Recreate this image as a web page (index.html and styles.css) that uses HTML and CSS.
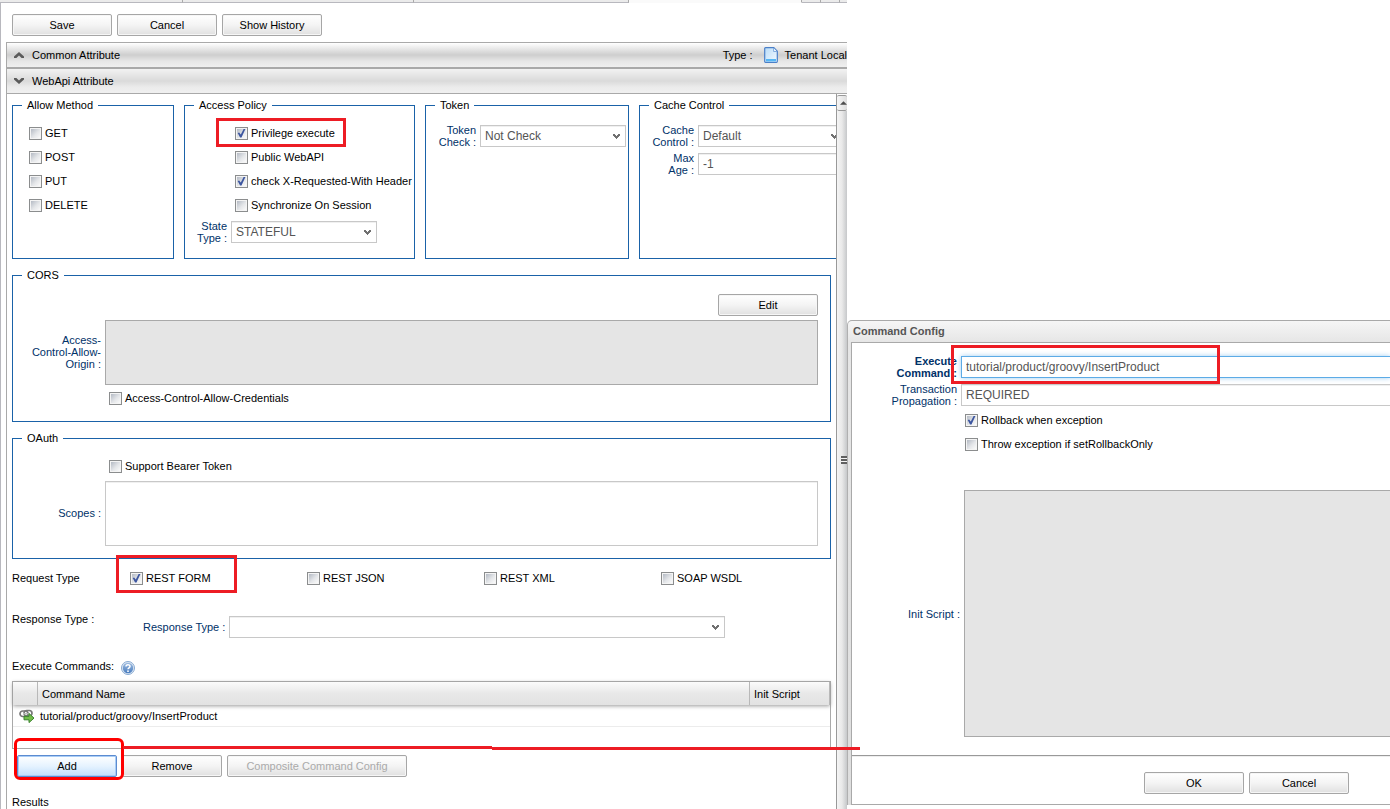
FILE: index.html
```html
<!DOCTYPE html>
<html lang="en">
<head>
<meta charset="utf-8">
<title>WebApi Attribute</title>
<link rel="stylesheet" href="styles.css">
</head>
<body>
<svg class="defs" aria-hidden="true">
  <symbol id="chevron" viewBox="0 0 7 5"><path d="M0 0h2v1h1v1h1V1h1V0h2v2H6v1H5v1H4v1H3V4H2V3H1V2H0z" fill="#707070"/></symbol>
</svg>
<div class="screen">
  <main class="editor">
    <div class="tabs" aria-hidden="true">
      <span class="tab tab-first"></span><span class="tab tab-second"></span><span class="tab tab-third"></span><span class="tab tab-active"></span><span class="tab tab-tool"></span><span class="tab tab-tool"></span><span class="tab tab-rest"></span>
    </div>
    <div class="toolbar">
      <button class="btn" type="button">Save</button>
      <button class="btn" type="button">Cancel</button>
      <button class="btn" type="button">Show History</button>
    </div>
    <section class="accordion">
      <header class="acc-head acc-common">
        <svg class="acc-arrow" viewBox="0 0 10 6"><path d="M0 6V4.6L5 0l5 4.6V6H7.6L5 3.4 2.4 6z" fill="#5a5a5a"/></svg>
        <span>Common Attribute</span>
        <span class="type-label">Type :</span>
        <svg class="doc-icon" viewBox="0 0 14 16"><defs><linearGradient id="paper" x2="1" y2="1"><stop stop-color="#b9dcf8"/><stop offset="1" stop-color="#f4faff"/></linearGradient></defs><path d="M1.5.7h8.3l3.5 3.6v10.2a.8.8 0 0 1-.8.8h-11a.8.8 0 0 1-.8-.8v-13a.8.8 0 0 1 .8-.8z" fill="url(#paper)" stroke="#4a7fc8" stroke-width="1.2"/><path d="M9.6 1v3.5h3.3" fill="#f4faff" stroke="#6b9bd8" stroke-width=".8"/><path d="M2 12h10v2.4H2z" fill="#55b6f5"/></svg>
        <span>Tenant Local</span>
      </header>
      <header class="acc-head acc-webapi">
        <svg class="acc-arrow" viewBox="0 0 10 6"><path d="M0 0v1.4L5 6l5-4.6V0H7.6L5 2.6 2.4 0z" fill="#5a5a5a"/></svg>
        <span>WebApi Attribute</span>
      </header>
      <div class="acc-body">
        <div class="pane">
          <div class="policies">
            <fieldset class="group g-method">
              <legend>Allow Method</legend>
              <label class="check"><input type="checkbox">GET</label>
              <label class="check"><input type="checkbox">POST</label>
              <label class="check"><input type="checkbox">PUT</label>
              <label class="check"><input type="checkbox">DELETE</label>
            </fieldset>
            <fieldset class="group g-access">
              <legend>Access Policy</legend>
              <label class="check mark mark-privilege"><input type="checkbox" checked>Privilege execute</label>
              <label class="check"><input type="checkbox">Public WebAPI</label>
              <label class="check"><input type="checkbox" checked>check X-Requested-With Header</label>
              <label class="check"><input type="checkbox">Synchronize On Session</label>
              <div class="field">
                <label class="caption" for="state">State<br>Type :</label>
                <div class="combo"><select id="state"><option>STATEFUL</option></select><svg><use href="#chevron"/></svg></div>
              </div>
            </fieldset>
            <fieldset class="group g-token">
              <legend>Token</legend>
              <div class="field">
                <label class="caption" for="token">Token<br>Check :</label>
                <div class="combo"><select id="token"><option>Not Check</option></select><svg><use href="#chevron"/></svg></div>
              </div>
            </fieldset>
            <fieldset class="group g-cache">
              <legend>Cache Control</legend>
              <div class="field">
                <label class="caption" for="cache">Cache<br>Control :</label>
                <div class="combo"><select id="cache"><option>Default</option></select><svg><use href="#chevron"/></svg></div>
              </div>
              <div class="field">
                <label class="caption" for="age">Max<br>Age :</label>
                <input class="text" id="age" type="text" value="-1">
              </div>
            </fieldset>
          </div>

          <fieldset class="group g-wide g-cors">
            <legend>CORS</legend>
            <div class="edit-row"><button class="btn" type="button">Edit</button></div>
            <div class="area-row">
              <label class="caption" for="origin">Access-<br>Control-Allow-<br>Origin :</label>
              <textarea class="area" id="origin" disabled></textarea>
            </div>
            <label class="check"><input type="checkbox">Access-Control-Allow-Credentials</label>
          </fieldset>

          <fieldset class="group g-wide g-oauth">
            <legend>OAuth</legend>
            <label class="check"><input type="checkbox">Support Bearer Token</label>
            <div class="area-row">
              <label class="caption" for="scopes">Scopes :</label>
              <textarea class="area" id="scopes"></textarea>
            </div>
          </fieldset>

          <div class="request-row">
            <span>Request Type</span>
            <label class="check mark mark-rest"><input type="checkbox" checked>REST FORM</label>
            <label class="check"><input type="checkbox">REST JSON</label>
            <label class="check"><input type="checkbox">REST XML</label>
            <label class="check"><input type="checkbox">SOAP WSDL</label>
          </div>

          <div class="response-row">
            <span>Response Type :</span>
            <div class="response-field">
              <label class="caption" for="response">Response Type :</label>
              <div class="combo combo-long"><select id="response"><option></option></select><svg><use href="#chevron"/></svg></div>
            </div>
          </div>

          <div class="commands-title">
            <span>Execute Commands:</span>
            <svg class="help-icon" viewBox="0 0 14 14"><defs><linearGradient id="ball" x2="0" y2="1"><stop stop-color="#9dbbe0"/><stop offset="1" stop-color="#4a7dbf"/></linearGradient></defs><circle cx="7" cy="7" r="6.5" fill="#dfe8f2" stroke="#86a9d2"/><circle cx="7" cy="7" r="5.2" fill="url(#ball)"/><path d="M5 5.6C5 3.2 9 3.2 9 5.4 9 6.8 7 6.8 7 8.3" fill="none" stroke="#fff" stroke-width="1.5"/><circle cx="7" cy="10.2" r=".9" fill="#fff"/></svg>
          </div>

          <div class="grid-box">
            <table class="grid">
              <colgroup><col class="col-icon"><col><col class="col-script"></colgroup>
              <thead><tr><th></th><th>Command Name</th><th>Init Script</th></tr></thead>
              <tbody><tr>
                <td class="icon-cell"><svg class="link-icon" viewBox="0 0 16 14"><g fill="none" stroke="#777" stroke-width="1.7"><rect x="1" y="2" width="8" height="5.5" rx="2.7"/><rect x="5" y="1.5" width="8" height="5.5" rx="2.7"/></g><path d="M4 4.7h6" stroke="#bbb" stroke-width="1.3"/><path d="M5 7.3h5V4.5l5 4.6-5 4.5v-2.8H5z" fill="#73bd4a" stroke="#37822a"/></svg></td>
                <td>tutorial/product/groovy/InsertProduct</td>
                <td></td>
              </tr></tbody>
            </table>
          </div>

          <div class="actions">
            <div class="mark mark-add"><button class="btn btn-focus" type="button">Add</button></div>
            <button class="btn" type="button">Remove</button>
            <button class="btn btn-long" type="button" disabled>Composite Command Config</button>
          </div>
          <div class="results">Results</div>
        </div>
        <div class="scrollbar" aria-hidden="true">
          <div class="scroll-up"><svg viewBox="0 0 8 4"><path d="M0 4l4-4 4 4z" fill="#4d4d4d"/></svg></div>
          <div class="thumb"><div class="grip"></div></div>
        </div>
      </div>
    </section>
  </main>

  <section class="dialog" aria-labelledby="dialog-title">
    <h2 class="dialog-title" id="dialog-title">Command Config</h2>
    <div class="dialog-frame">
      <div class="dialog-form">
        <div class="field mark mark-command">
          <label class="caption caption-strong" for="command">Execute<br>Command :</label>
          <input class="text text-focus" id="command" type="text" value="tutorial/product/groovy/InsertProduct">
        </div>
        <div class="field">
          <label class="caption" for="propagation">Transaction<br>Propagation :</label>
          <input class="text" id="propagation" type="text" value="REQUIRED">
        </div>
        <div class="dialog-checks">
          <label class="check"><input type="checkbox" checked>Rollback when exception</label>
          <label class="check"><input type="checkbox">Throw exception if setRollbackOnly</label>
        </div>
        <div class="script-row">
          <label class="caption" for="script">Init Script :</label>
          <textarea class="area" id="script" disabled></textarea>
        </div>
      </div>
      <footer class="dialog-foot">
        <button class="btn" type="button">OK</button>
        <button class="btn" type="button">Cancel</button>
      </footer>
    </div>
  </section>
  <div class="connector" aria-hidden="true"><i></i><i></i></div>
</div>
</body>
</html>
```
FILE: styles.css
```css
*, *::before, *::after { box-sizing: border-box; }

body {
  margin: 0;
  background: #fff;
  color: #000;
  font: 11px/12px "Liberation Sans", Arial, sans-serif;
}

button, input, select, textarea { font-family: inherit; margin: 0; }

.defs { position: absolute; width: 0; height: 0; }

.screen {
  position: relative;
  display: grid;
  grid-template-columns: minmax(0, 847fr) minmax(0, 543fr);
  height: 100vh;
  overflow: hidden;
}

/* Editor */
.editor {
  display: flex;
  flex-direction: column;
  min-height: 0;
}

.tabs { display: flex; height: 3px; flex: none; }
.tab {
  background: #ebebeb;
  border-bottom: 1px solid #b8b8be;
  border-right: 1px solid #aaa;
}
.tab-first { width: 183px; }
.tab-second { width: 231px; }
.tab-third { width: 215px; }
.tab-active { width: 173px; background: #fafafa; border-bottom-color: #fafafa; }
.tab-tool { width: 19px; }
.tab-rest { flex: 1; border-right: 0; }

.toolbar {
  display: flex;
  gap: 5px;
  padding: 11px 11px 6px;
  border-left: 1px solid #b8b8be;
}

.btn {
  width: 100px;
  height: 22px;
  padding: 0;
  border: 1px solid #a6a6a6;
  border-radius: 2px;
  background: linear-gradient(#fff, #f4f4f4 50%, #e0e0e0);
  box-shadow: inset 0 0 0 1px #f6f6f6;
  color: #000;
  font-size: 11px;
  line-height: 12px;
}
.btn:disabled { color: #aaa; }
.btn-long { width: 180px; }
.btn-focus {
  border-color: #5b8bd0;
  background: linear-gradient(#fff, #e6f3ff 50%, #c2e0fd);
  box-shadow: inset 0 0 0 1px #a9cdf6;
}

.accordion {
  display: flex;
  flex: 1;
  flex-direction: column;
  min-height: 0;
  padding-left: 5px;
  border-left: 1px solid #b8b8be;
}

.acc-head {
  display: flex;
  align-items: center;
  flex: none;
  padding-left: 7px;
  border-left: 1px solid #a9a9a9;
  white-space: nowrap;
}
.acc-common {
  height: 27px;
  border-top: 1px solid #a9a9a9;
  border-bottom: 2px solid #a9a9a9;
  background: linear-gradient(#fff, #cecece 50%, #e6e6e6 75%, #efefef);
}
.acc-webapi {
  height: 25px;
  border-bottom: 1px solid #a9a9a9;
  background: linear-gradient(#f2f2f2, #dadada 50%, #ebebeb 75%, #f0f0f0);
}
.acc-arrow { width: 10px; height: 6px; margin-right: 8px; }
.type-label { margin-left: auto; }
.doc-icon { width: 14px; height: 16px; margin: 0 7px 0 11px; }

.acc-body {
  display: flex;
  flex: 1;
  min-height: 0;
  border-left: 1px solid #a9a9a9;
}
.pane {
  flex: 1;
  min-width: 0;
  padding: 5px 5px 0;
  overflow: hidden;
}

.scrollbar {
  display: flex;
  flex-direction: column;
  flex: none;
  width: 11px;
  padding-top: 1px;
  overflow: hidden;
  border-left: 1px solid #999;
}
.scroll-up {
  display: flex;
  align-items: center;
  justify-content: flex-end;
  height: 16px;
  border: 1px solid #999;
  border-width: 1px 0;
  border-radius: 2px;
  background: linear-gradient(90deg, #f6f6f6, #ddd);
}
.scroll-up svg { width: 7px; height: 4px; }
.thumb {
  display: flex;
  align-items: center;
  justify-content: flex-end;
  flex: 1;
  background: linear-gradient(90deg, #f5f5f5, #e9e9e9 50%, #c6c8ca);
}
.grip {
  width: 6px;
  height: 8px;
  background: repeating-linear-gradient(#606060 0 2px, #f4f4f4 2px 3px);
}

/* Form groups */
.group {
  min-width: 0;
  margin: 0 0 10px;
  padding: 0 9px;
  border: 1px solid #1a62a8;
}
.group legend { padding: 0 5px; line-height: 13px; }

.policies { display: flex; gap: 10px; }
.policies .group { flex: none; height: 160px; padding: 9px 0 0; }
.policies legend { margin-left: 9px; }
.policies .g-token, .policies .g-cache { padding-top: 10px; }
.g-method { width: 162px; }
.g-access { width: 231px; }
.g-token { width: 204px; }
.g-cache { width: 231px; }
.g-method .check { padding-left: 16px; }
.g-access .check { padding-left: 50px; }

.check {
  display: flex;
  align-items: center;
  gap: 3px;
  height: 24px;
  white-space: nowrap;
}
.check input {
  display: grid;
  place-items: center;
  flex: none;
  width: 13px;
  height: 13px;
  padding: 1px;
  border: 1px solid #8b8d8e;
  appearance: none;
  background: linear-gradient(135deg, #b4bac4, #e4e6e9 55%, #fafafa) content-box, #f4f4f4;
}
.check input:checked::before {
  content: "";
  width: 9px;
  height: 9px;
  background: #3d56a0;
  clip-path: polygon(8% 50%, 24% 44%, 42% 68%, 76% 0, 96% 0, 50% 100%, 34% 100%);
}

.field { display: flex; align-items: center; height: 28px; }
.g-access .field { height: 30px; }
.caption {
  flex: none;
  padding-right: 4px;
  color: #003168;
  text-align: right;
  white-space: nowrap;
}
.caption-strong { font-weight: bold; }
.g-access .caption { width: 46px; }
.g-token .caption { width: 54px; }
.g-cache .caption { width: 58px; }

.combo { display: grid; align-items: center; width: 146px; }
.combo-long { width: 496px; }
.combo select, .combo svg { grid-area: 1 / 1; }
.combo svg {
  width: 7px;
  height: 5px;
  margin-right: 6px;
  justify-self: end;
  pointer-events: none;
}
.combo select, .text {
  width: 100%;
  height: 22px;
  padding: 0 4px;
  border: 1px solid #c8c8c8;
  border-radius: 0;
  appearance: none;
  background: #fff;
  box-shadow: inset 0 1px 0 #f0f0f0;
  color: #555;
  font-size: 12px;
  line-height: 20px;
}
.g-cache .text { width: 146px; }

.area {
  display: block;
  flex: 1;
  min-width: 0;
  height: 65px;
  border: 1px solid #c8c8c8;
  border-radius: 0;
  background: #fff;
  box-shadow: inset 0 1px 0 #f0f0f0;
  resize: none;
}
.area:disabled { border-color: #a9a9a9; background: #e5e5e5; box-shadow: none; }

.g-wide { padding-right: 12px; }
.g-wide .caption { width: 83px; padding-bottom: 2px; }
.g-wide .check { padding-left: 87px; }
.edit-row { display: flex; justify-content: flex-end; padding: 12px 0 4px; }
.area-row { display: flex; align-items: center; }
.g-cors { padding-bottom: 11px; }
.g-cors .check { margin-top: 1px; }
.g-oauth { padding-top: 9px; padding-bottom: 12px; margin-bottom: 0; }
.g-oauth .check { margin-bottom: 3px; }

.request-row {
  display: grid;
  grid-template-columns: 118px repeat(4, 177px);
  align-items: center;
  margin-top: 7px;
}
.response-row { display: flex; margin-top: 23px; }
.response-row > span { flex: none; width: 131px; }
.response-field { display: flex; align-items: center; margin-top: 3px; }

.commands-title { display: flex; gap: 7px; height: 21px; margin-top: 22px; }
.help-icon { width: 14px; height: 14px; margin-top: 1px; }

.grid-box { min-height: 68px; border: 1px solid #a9a9a9; }
.grid { width: 100%; border-collapse: separate; border-spacing: 0; table-layout: fixed; }
.col-icon { width: 25px; }
.col-script { width: 80px; }
.grid thead { box-shadow: 0 1px 4px #999; }
.grid th {
  height: 23px;
  padding: 0 4px;
  border-right: 1px solid #b8b8b8;
  background: linear-gradient(#fbfbfb, #e8e8e8 50%, #e2e2e2);
  font-weight: normal;
  text-align: left;
}
.grid td { height: 22px; padding: 0 2px; border-bottom: 1px solid #ececec; }
.grid .icon-cell { padding: 0 0 0 6px; }
.link-icon { display: block; width: 16px; height: 14px; }

.actions { display: flex; gap: 5px; padding: 6px 0 0 5px; }
.results { margin-top: 19px; }

/* Command dialog */
.dialog {
  display: flex;
  flex-direction: column;
  margin: 320px 0 4px;
  padding-left: 4px;
  border-top: 1px solid #a9a9a9;
  border-left: 1px solid #b0b0b0;
  border-top-left-radius: 5px;
  background: linear-gradient(#f6f6f6, #e6e6e6 21px, #dedede);
}
.dialog { padding-left: 3px; }
.dialog-title {
  margin: 0;
  padding-left: 2px;
  color: #555;
  font-size: 11px;
  line-height: 21px;
}
.dialog-frame {
  display: flex;
  flex: 1;
  flex-direction: column;
  min-height: 0;
  border: 1px solid #a9a9a9;
  border-right: 0;
  background: #fff;
}
.dialog-form { display: flex; flex: 1; flex-direction: column; padding-top: 10px; }
.dialog-form .caption { width: 109px; }
.dialog-checks { margin-top: -1px; }
.dialog-form .check { padding-left: 113px; }
.dialog-form .text { flex: 1; border-right: 0; }
.dialog-form .text-focus { border-color: #5cabe6; outline: 0; box-shadow: 0 0 5px #a0cef2; }
.dialog-form .script-row .caption { width: 112px; }
.script-row { display: flex; flex: 1; align-items: center; margin: 34px 0 18px; }
.script-row .area { align-self: stretch; height: auto; border-right: 0; }
.dialog-foot {
  display: flex;
  gap: 5px;
  justify-content: flex-end;
  padding: 16px 41px 10px;
  border-top: 1px solid #999;
  box-shadow: inset 0 1px 0 #eee;
}

/* Red callouts laid over the form */
.mark { position: relative; }
.mark::after {
  content: "";
  position: absolute;
  border: 3px solid #ed1c24;
  pointer-events: none;
}
.mark-privilege::after { top: -3px; bottom: -2px; left: 31px; width: 130px; }
.mark-rest::after { top: -11px; bottom: -3px; left: -14px; width: 121px; }
.mark-add::after { inset: -17px -7px -3px -3px; border-color: #f00; border-radius: 6px; }
.mark-command::after { top: -8px; bottom: -3px; left: 99px; width: 269px; }

.connector {
  position: absolute;
  top: 746px;
  left: 123px;
  display: flex;
  align-items: flex-start;
  width: 737px;
  height: 4px;
}
.connector i { flex: 1; height: 3px; background: #ed1c24; }
.connector i + i { align-self: flex-end; }
```
